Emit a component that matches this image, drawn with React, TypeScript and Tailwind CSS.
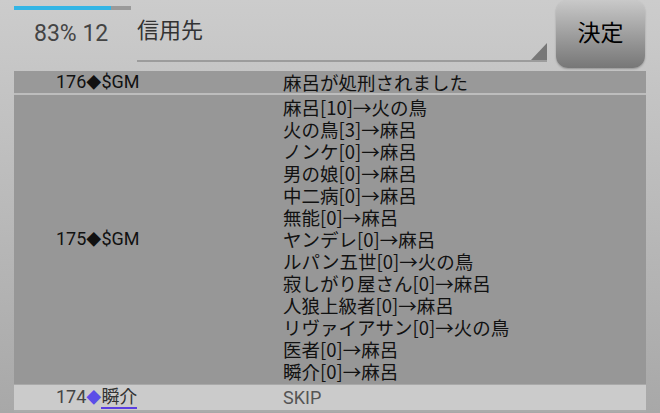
import React from 'react';

const votes: string[] = [
  '麻呂[10]→火の鳥',
  '火の鳥[3]→麻呂',
  'ノンケ[0]→麻呂',
  '男の娘[0]→麻呂',
  '中二病[0]→麻呂',
  '無能[0]→麻呂',
  'ヤンデレ[0]→麻呂',
  'ルパン五世[0]→火の鳥',
  '寂しがり屋さん[0]→麻呂',
  '人狼上級者[0]→麻呂',
  'リヴァイアサン[0]→火の鳥',
  '医者[0]→麻呂',
  '瞬介[0]→麻呂',
];

const font = { fontFamily: 'Roboto, "Noto Sans CJK JP", sans-serif' };
const cjk = { fontFamily: '"Noto Sans CJK JP", Roboto, sans-serif' };

export default function App() {
  return (
    <div
      className="w-[660px] h-[413px] overflow-hidden bg-gradient-to-b from-[#cccccc] to-[#a8a8a8] text-[#111]"
      style={font}
    >
      {/* top bar */}
      <div className="flex h-[71px]">
        <div className="w-[137px] shrink-0 pt-[6px]">
          <div className="ml-[14px] w-[117px] h-[4px] bg-[#9a9a9a] flex">
            <div className="w-[97px] h-full bg-[#33b5e5]"></div>
          </div>
          <div className="ml-[34px] mt-[10px] text-[23px] leading-[28px] text-[#444]">83% 12</div>
        </div>
        <div className="w-[410px] shrink-0 flex flex-col">
          <div className="pt-[16px] text-[22px] leading-[30px] text-[#333]">信用先</div>
          <div className="flex-1 flex items-end">
            <div className="relative w-full h-[13px] border-b-2 border-[#9c9c9c] mb-[9px]">
              <svg className="absolute right-0 bottom-0" width="16" height="17" viewBox="0 0 16 17">
                <polygon points="16,0 16,17 0,17" fill="#777" />
              </svg>
            </div>
          </div>
        </div>
        <div className="ml-[9px] w-[89px] h-[68px] rounded-[12px] bg-gradient-to-b from-[#c9c9c9] to-[#777777] shadow-[0_1px_2px_rgba(0,0,0,0.25)] flex items-center justify-center text-[23px] text-black">
          決定
        </div>
      </div>

      {/* log table */}
      <div className="mx-[14px] text-[18px]">
        <div className="flex h-[22px] items-center bg-[#999999]">
          <div className="w-[269px] pl-[42px] leading-[22px]">
            176<span className="text-[15px]">◆</span>$GM
          </div>
          <div className="leading-[22px] text-[18.5px]" style={cjk}>麻呂が処刑されました</div>
        </div>
        <div className="h-[2px] bg-[#bdbdbd]"></div>
        <div className="flex items-center bg-[#979797] pt-[1px] pb-[2px]">
          <div className="w-[269px] pl-[42px] leading-[22px]">
            175<span className="text-[15px]">◆</span>$GM
          </div>
          <div className="flex flex-col text-[18.5px]" style={cjk}>
            {votes.map((v, i) => (
              <div key={i} className="leading-[22px]">{v}</div>
            ))}
          </div>
        </div>
        <div className="h-[1px] bg-[#a9a9a9]"></div>
        <div className="flex h-[27px] items-center bg-[#cbcbcb] border-b-2 border-[#ababab]">
          <div className="w-[269px] pl-[42px] leading-[22px] text-[#444]">
            174<span className="text-[15px] text-[#5b4ee8]">◆</span>
            <span className="text-[#333] border-b-2 border-[#5a3fe0]">瞬介</span>
          </div>
          <div className="leading-[22px] text-[#555]">SKIP</div>
        </div>
      </div>
    </div>
  );
}
